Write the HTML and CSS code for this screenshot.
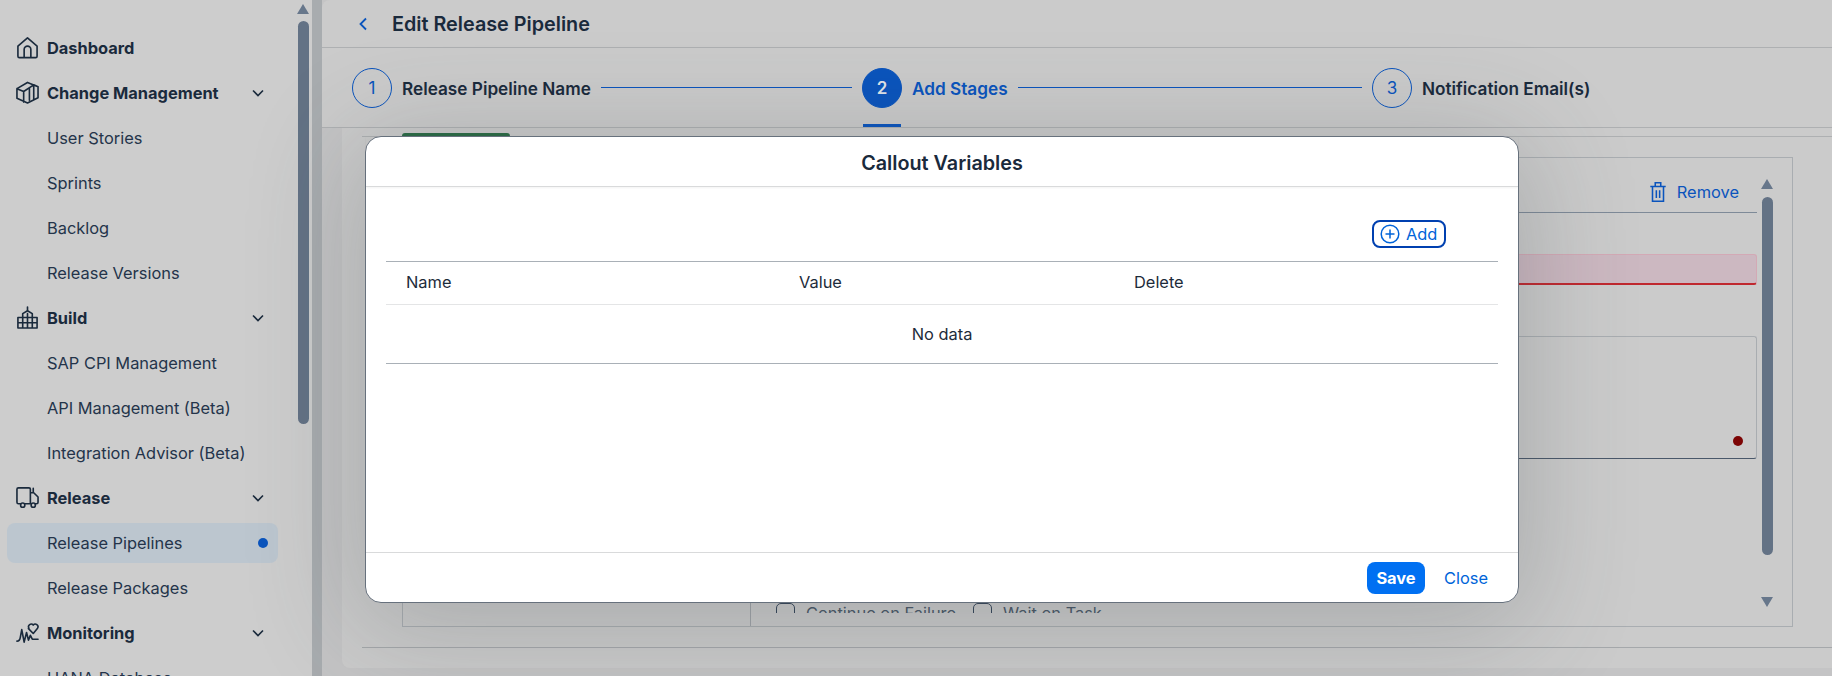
FILE: index.html
```html
<!DOCTYPE html>
<html lang="en">
<head>
<meta charset="utf-8">
<title>Edit Release Pipeline</title>
<link rel="stylesheet" href="styles.css">
</head>
<body>
<div class="app">
  <aside class="sidebar">
    <nav class="nav">
      <a class="nav-item head"><svg class="nav-icon" viewBox="0 0 24 24"><path d="M2 21V10.500L12 2l10 8.500V21a1.500 1.500 0 0 1-1.500 1.500h-17A1.500 1.500 0 0 1 2 21zM8.500 22.500V14a3.500 3.500 0 0 1 7 0v8.500"/></svg><span>Dashboard</span></a>
      <a class="nav-item head"><svg class="nav-icon" viewBox="0 0 24 24"><path d="M1 8 12 1.500 23 6v11.500L12 23 1 18zM1 8l7 3v11M8 11 18.500 4M14 7.500V20M23 6l-4.500-2M18.500 4v15"/></svg><span>Change Management</span><svg class="chev" viewBox="0 0 12 8"><path d="M1 1.500 6 6.500l5-5"/></svg></a>
      <a class="nav-item">User Stories</a>
      <a class="nav-item">Sprints</a>
      <a class="nav-item">Backlog</a>
      <a class="nav-item">Release Versions</a>
      <a class="nav-item head"><svg class="nav-icon" viewBox="0 0 24 24"><path d="M2 23V12h5V8l5-3 5 3v4h5v11zM2 17.500h20M7 12h10M7 12v11M12 8v15M17 12v11M12 5V1"/></svg><span>Build</span><svg class="chev" viewBox="0 0 12 8"><path d="M1 1.500 6 6.500l5-5"/></svg></a>
      <a class="nav-item">SAP CPI Management</a>
      <a class="nav-item">API Management (Beta)</a>
      <a class="nav-item">Integration Advisor (Beta)</a>
      <a class="nav-item head"><svg class="nav-icon" viewBox="0 0 24 24"><path d="M5 18.500H2.500A1.500 1.500 0 0 1 1 17V3.500A1.500 1.500 0 0 1 2.500 2h11A1.500 1.500 0 0 1 15 3.500V18.500H9M15 7h3.500L23 11.500V17a1.500 1.500 0 0 1-1.500 1.500H20M15 18.500h1M18 2.500v4.500"/><circle cx="7" cy="20" r="2.200"/><circle cx="18" cy="20" r="2.200"/></svg><span>Release</span><svg class="chev" viewBox="0 0 12 8"><path d="M1 1.500 6 6.500l5-5"/></svg></a>
      <a class="nav-item active">Release Pipelines<i class="dot"></i></a>
      <a class="nav-item">Release Packages</a>
      <a class="nav-item head"><svg class="nav-icon" viewBox="0 0 24 24"><path d="M1 21c2 0 3-1 3.500-4L6 9l2.500 13L11 12l2 8 2-5 2 4h6M13 8l5 5 4.500-5.500a2.800 2.800 0 0 0-4.500-3.300 2.800 2.800 0 0 0-4.500 3.300z"/></svg><span>Monitoring</span><svg class="chev" viewBox="0 0 12 8"><path d="M1 1.500 6 6.500l5-5"/></svg></a>
      <a class="nav-item">HANA Database</a>
    </nav>
    <div class="scroll side-scroll">
      <i class="arrow up"></i>
      <i class="thumb"></i>
    </div>
  </aside>
  <div class="gutter"></div>
  <main class="main">
    <header class="page-head">
      <svg class="back" viewBox="0 0 10 14"><path d="M8 1.500 2.500 7 8 12.500"/></svg>
      <h1>Edit Release Pipeline</h1>
    </header>
    <ol class="steps">
      <li class="step"><b class="num">1</b><span class="step-label">Release Pipeline Name</span><i class="step-line"></i></li>
      <li class="step current"><b class="num">2</b><span class="step-label">Add Stages</span><i class="step-line"></i></li>
      <li class="step"><b class="num">3</b><span class="step-label">Notification Email(s)</span></li>
    </ol>
    <section class="card">
      <div class="tabs"><i class="tab"></i></div>
      <div class="panel">
        <div class="panel-left"></div>
        <div class="panel-right">
          <div class="form">
            <div class="form-head">
              <span class="remove"><svg viewBox="0 0 16 20"><path d="M1 5h14M3 5v13.500h10V5M5.500 5V1.500h5V5M6.500 8.500v7M9.500 8.500v7"/></svg>Remove</span>
            </div>
            <div class="error-input"></div>
            <div class="textarea"><i class="red-dot"></i></div>
            <div class="checks">
              <label class="check"><i class="box"></i>Continue on Failure</label>
              <label class="check"><i class="box"></i>Wait on Task</label>
            </div>
          </div>
          <div class="scroll form-scroll">
            <i class="arrow up"></i>
            <i class="thumb"></i>
            <i class="arrow down"></i>
          </div>
        </div>
      </div>
      <div class="card-foot"></div>
    </section>
  </main>
</div>

<div class="modal" role="dialog">
  <h2 class="modal-title">Callout Variables</h2>
  <div class="modal-body">
    <div class="toolbar">
      <button class="add-btn"><svg viewBox="0 0 20 20"><circle cx="10" cy="10" r="8.800"/><path d="M10 5.500v9M5.500 10h9"/></svg>Add</button>
    </div>
    <table class="vars">
      <thead>
        <tr><th class="col-name">Name</th><th class="col-value">Value</th><th>Delete</th></tr>
      </thead>
      <tbody>
        <tr><td colspan="3">No data</td></tr>
      </tbody>
    </table>
  </div>
  <footer class="modal-foot">
    <button class="save">Save</button>
    <button class="close">Close</button>
  </footer>
</div>
</body>
</html>
```

FILE: styles.css
```css
* { box-sizing: border-box; }
html, body { margin: 0; height: 676px; overflow: hidden; }
body {
  font-family: Inter, "Noto Sans", "Liberation Sans", sans-serif;
  font-size: 16.4px;
  color: #1d2b3a;
  background: #cbcbcb;
}
.app { display: flex; height: 676px; }

/* sidebar */
.sidebar { flex: 0 0 312px; display: flex; background: #cdcdcd; overflow: hidden; }
.nav { width: 296px; padding: 25px 0 0 7px; display: flex; flex-direction: column; flex: none; }
.nav-item {
  flex: 0 0 45px; width: 271px; display: flex; align-items: center; padding-left: 40px;
  position: relative; color: #24344a; white-space: nowrap;
}
.nav-item.head { font-weight: 700; color: #1a2a3c; }
.nav-icon {
  width: 23px; height: 23px; margin-left: -31px; margin-right: 8px; flex: none;
  fill: none; stroke: #1a2a3c; stroke-width: 1.7; stroke-linejoin: round; stroke-linecap: round;
}
.chev { width: 12px; height: 8px; margin-left: auto; margin-right: 14px; fill: none; stroke: #1a2a3c; stroke-width: 1.6; }
.nav-item.active { flex-basis: 40px; margin: 2.5px 0; background: #bcc6cf; border-radius: 8px; }
.dot { width: 10px; height: 10px; border-radius: 50%; background: #0a54bd; margin-left: auto; margin-right: 10px; }

.scroll { display: flex; flex-direction: column; align-items: center; flex: none; }
.side-scroll { width: 14px; padding-top: 4px; }
.arrow { display: block; width: 0; height: 0; border-left: 6.5px solid transparent; border-right: 6.5px solid transparent; }
.arrow.up { border-bottom: 10px solid #67778b; }
.arrow.down { border-top: 10px solid #67778b; }
.thumb { display: block; width: 11px; background: #637285; border-radius: 6px; }
.side-scroll .thumb { height: 403px; margin-top: 7px; }
.gutter { flex: 0 0 10px; background: #a8acaf; }

/* main */
.main { flex: 1; min-width: 0; display: flex; flex-direction: column; background: #c4c4c5; }
.page-head { height: 48px; flex: none; display: flex; align-items: center; padding: 0 0 0 36px; border-bottom: 1px solid #aeb0b2; background: #cbcbcb; border-top-left-radius: 8px; }
.back { width: 10px; height: 14px; fill: none; stroke: #0a54bd; stroke-width: 1.800; }
h1 { margin: 0 0 0 24px; font-size: 19.8px; font-weight: 600; color: #1a2a3c; }
.steps {
  list-style: none; margin: 0; padding: 0 0 0 30px; height: 80px; flex: none; background: #cbcbcb;
  display: flex; align-items: center; border-bottom: 1px solid #aeb0b2;
}
.step { flex: 0 0 510px; display: flex; align-items: center; position: relative; height: 40px; }
.num {
  width: 40px; height: 40px; border: 1px solid #0a54bd; border-radius: 50%; flex: none;
  display: flex; align-items: center; justify-content: center; font-weight: 400; font-size: 17px; color: #0a54bd;
}
.step-label { margin-left: 10px; font-size: 17.2px; font-weight: 600; color: #1a2a3c; white-space: nowrap; padding-top: 2px; }
.step-line { flex: 1; height: 1px; background: #0a54bd; margin: 0 10px; }
.current .num { background: #0a54bd; color: #dfe4ea; font-weight: 600; }
.current .step-label { color: #0a54bd; }
.current::after {
  content: ""; position: absolute; left: 1px; top: 56px; width: 38px; height: 3px; background: #0a54bd;
}

/* card behind the dialog */
.card { flex: 1; margin: 0 0 8px 20px; min-height: 0; display: flex; flex-direction: column; background: #cbcbcb; border-bottom-left-radius: 8px; }
.tabs { flex: none; height: 9px; margin-left: 20px; padding-left: 40px; border-bottom: 1px solid #aeb0b2; display: flex; align-items: flex-end; }
.tab { display: block; width: 108px; height: 4px; background: #2a6b45; border-radius: 3px 3px 0 0; margin-bottom: -1px; }
.panel { flex: none; height: 470px; margin: 20px 39px 20px 60px; border: 1px solid #a9adb1; display: grid; grid-template-columns: 348px 1fr; }
.panel-left { border-right: 1px solid #a0a4a8; }
.panel-right { display: flex; height: 443px; margin-top: 12px; overflow: hidden; padding-left: 25px; }
.form { flex: 1; min-width: 0; }
.form-head { height: 43px; border-bottom: 1px solid #7e8a98; display: flex; justify-content: flex-end; align-items: center; padding: 2px 18px 0 0; }
.remove { display: flex; align-items: center; gap: 10px; color: #0a54bd; }
.remove svg { width: 18px; height: 22px; fill: none; stroke: #0a54bd; stroke-width: 1.400; }
.error-input { height: 31px; margin-top: 41px; background: #ccb8c1; border: 1px solid #d3a9b5; border-bottom: 2px solid #c0282f; border-radius: 3px; }
.textarea { height: 123px; margin-top: 51px; border: 1px solid #a9adb1; border-bottom-color: #4a586a; border-radius: 3px; position: relative; }
.red-dot { position: absolute; right: 13px; bottom: 12px; width: 10px; height: 10px; border-radius: 50%; background: #7c0404; }
.checks { display: flex; gap: 17px; margin-top: 144px; color: #4a5868; }
.check { display: flex; align-items: flex-start; gap: 11px; line-height: 20px; }
.box { display: block; width: 19px; height: 19px; border: 1px solid #36465a; border-radius: 5px; flex: none; }
.form-scroll { width: 12px; margin-left: 4px; padding-top: 9px; margin-right: 19px; height: 443px; }
.form-scroll .thumb { height: 358px; margin-top: 8px; }
.form-scroll .arrow.down { margin-top: 42px; }
.card-foot { height: 1px; margin-left: 20px; background: #a5a8ab; flex: none; }

/* dialog */
.modal {
  position: absolute; left: 365px; top: 136px; width: 1154px; height: 467px;
  background: #fff; border: 1px solid #67717d; border-radius: 16px;
  display: flex; flex-direction: column;
  box-shadow: 0 16px 110px 10px rgba(60, 66, 72, .24);
}
.modal-title {
  flex: none; height: 50px; margin: 0; padding-top: 2px; border-bottom: 1px solid #d9dadb;
  display: flex; align-items: center; justify-content: center;
  font-size: 19.8px; font-weight: 600; color: #1a2a3c; box-shadow: 0 1px 2px rgba(0,0,0,.05);
}
.modal-body { flex: 1; padding: 0 20px; }
.toolbar { height: 74px; display: flex; justify-content: flex-end; align-items: flex-start; padding: 33px 52px 0 0; }
.add-btn {
  display: flex; align-items: center; gap: 6px; height: 28px; width: 74px; padding: 0 0 0 6px;
  background: #fff; border: 2px solid #0040b0; border-radius: 8px; color: #0064d9; font: inherit;
}
.add-btn svg { width: 20px; height: 20px; fill: none; stroke: #0064d9; stroke-width: 1.500; }
.vars { width: 100%; border-collapse: collapse; table-layout: fixed; border-top: 1px solid #a9b0b7; border-bottom: 1px solid #a9b0b7; }
.vars th { height: 43px; padding: 0 0 2px 20px; text-align: left; font-weight: 400; color: #1d2b3a; border-bottom: 1px solid #e4e5e6; }
.col-name { width: 393px; }
.col-value { width: 335px; }
.vars td { height: 59px; text-align: center; color: #1d2b3a; }
.modal-foot {
  flex: none; height: 50px; border-top: 1px solid #d9dadb;
  display: flex; align-items: center; justify-content: flex-end; padding: 0 30px 0 0;
}
.save { width: 58px; height: 32px; border: 0; border-radius: 8px; background: #0070f2; color: #fff; font: inherit; font-weight: 700; padding: 0; }
.close { margin-left: 19px; padding: 0; border: 0; background: none; color: #0064d9; font: inherit; }
```
